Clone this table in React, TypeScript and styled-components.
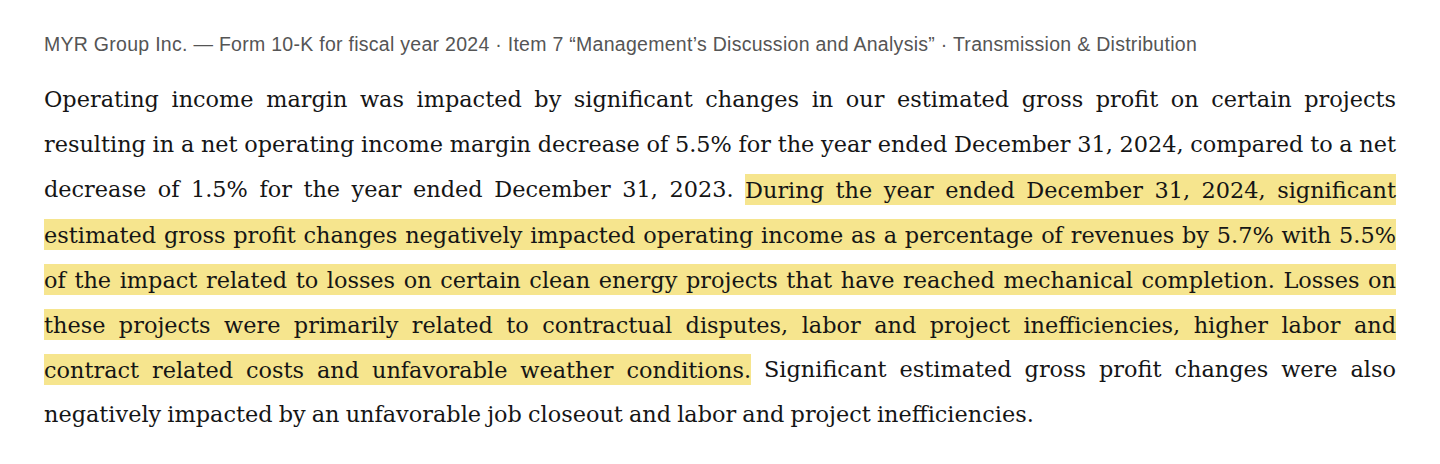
import styled, { createGlobalStyle } from "styled-components";

const GlobalStyle = createGlobalStyle`
    html, body {
        margin: 0;
        padding: 0;
        background: #ffffff;
    }
`;

interface ISegment {
    text: string,
    marked?: boolean
}

// each line of the passage as it breaks in the filing excerpt
const lines: ISegment[][] = [
    [{ text: "Operating income margin was impacted by significant changes in our estimated gross profit on certain projects" }],
    [{ text: "resulting in a net operating income margin decrease of 5.5% for the year ended December 31, 2024, compared to a net" }],
    [
        { text: "decrease of 1.5% for the year ended December 31, 2023. " },
        { text: "During the year ended December 31, 2024, significant", marked: true }
    ],
    [{ text: "estimated gross profit changes negatively impacted operating income as a percentage of revenues by 5.7% with 5.5%", marked: true }],
    [{ text: "of the impact related to losses on certain clean energy projects that have reached mechanical completion. Losses on", marked: true }],
    [{ text: "these projects were primarily related to contractual disputes, labor and project inefficiencies, higher labor and", marked: true }],
    [
        { text: "contract related costs and unfavorable weather conditions.", marked: true },
        { text: " Significant estimated gross profit changes were also" }
    ],
    [{ text: "negatively impacted by an unfavorable job closeout and labor and project inefficiencies." }]
];

function App() {
    return (
        <>
            <GlobalStyle />
            <Page>
                <Source>
                    MYR Group Inc. — Form 10-K for fiscal year 2024 · Item 7 “Management’s Discussion and Analysis” · Transmission &amp; Distribution
                </Source>
                <Passage>
                    {lines.map((line, i) => (
                        <Line key={i} $last={i === lines.length - 1}>
                            {line.map((seg, j) =>
                                seg.marked ? <Highlight key={j}>{seg.text}</Highlight> : <span key={j}>{seg.text}</span>
                            )}
                        </Line>
                    ))}
                </Passage>
            </Page>
        </>
    );
}

const Page = styled.main`
    padding: 32px 44px 20px 44px;
    width: 1352px;
`;

const Source = styled.div`
    font-family: "Liberation Sans", Arial, sans-serif;
    font-size: 19.5px;
    letter-spacing: 0.28px;
    line-height: 24px;
    color: #555555;
    white-space: nowrap;
`;

const Passage = styled.div`
    margin-top: 21px;
    font-family: "DejaVu Serif", Georgia, serif;
    font-size: 22.4px;
    line-height: 45px;
    word-spacing: -1px;
    color: #151515;
`;

const Line = styled.div<{ $last: boolean }>`
    white-space: nowrap;
    text-align: justify;
    text-align-last: ${props => props.$last ? "left" : "justify"};
`;

const Highlight = styled.mark`
    background-color: #f6e58e;
    color: inherit;
    padding: 2.5px 0;
`;

export default App;
